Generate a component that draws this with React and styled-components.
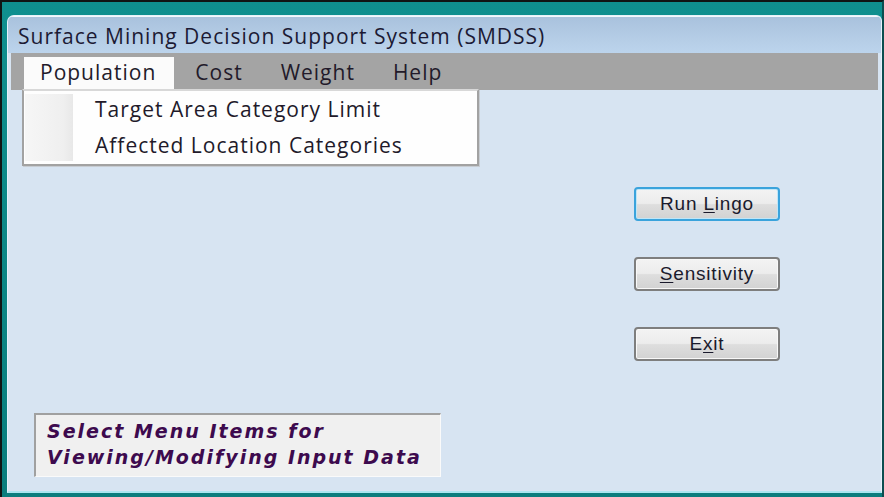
import React from 'react'
import styled, { createGlobalStyle } from 'styled-components'

const GlobalStyle = createGlobalStyle`
  html, body {
    margin: 0;
    padding: 0;
    background: #0a6f70;
  }
  * { box-sizing: border-box; }
`

const Screen = styled.div`
  width: 884px;
  height: 497px;
  overflow: hidden;
  display: flex;
  border-top: 2px solid #101414;
  border-left: 2px solid #101414;
  border-right: 2px solid #0c4e50;
  background: linear-gradient(180deg, #0f8f8f 0%, #0b8584 60%, #0a7d7d 100%);
  padding: 13px 0 4px 5px;
`

const Window = styled.div`
  flex: 1;
  display: flex;
  flex-direction: column;
  border: 1px solid #e6f1fb;
  border-bottom: 2px solid #a9e6f0;
  border-radius: 7px 6px 0 0;
  background: #d7e4f2;
  overflow: hidden;
`

const TitleBar = styled.div`
  height: 37px;
  flex: none;
  display: flex;
  align-items: center;
  padding: 2px 0 0 10px;
  background: linear-gradient(180deg, #a9c2dd 0%, #b5cde6 60%, #bcd4ec 100%);
  border-top: 1px solid #f4f8fc;
  font-family: "Open Sans", "Noto Sans", sans-serif;
  font-size: 21px;
  font-weight: 500;
  letter-spacing: 1px;
  color: #1c1a34;
`

const MenuBar = styled.div`
  height: 37px;
  flex: none;
  margin: 0 3px;
  display: flex;
  align-items: flex-end;
  padding-left: 13px;
  background: #a4a4a4;
  font-family: "Open Sans", "Noto Sans", sans-serif;
  font-size: 21px;
  font-weight: 500;
  letter-spacing: 1px;
  color: #221a2a;
`

const MenuItem = styled.div`
  height: 33px;
  display: flex;
  align-items: center;
  padding: 0 ${p => p.$right || 0}px 4px ${p => p.$left || 0}px;
  background: ${p => (p.$open ? '#fbfbfb' : 'transparent')};
`

const Content = styled.div`
  flex: 1;
  position: relative;
  display: flex;
  flex-direction: column;
`

const Dropdown = styled.div`
  position: absolute;
  top: -1px;
  left: 14px;
  width: 457px;
  height: 77px;
  display: flex;
  background: #fefefe;
  border: 2px solid #a2a2a2;
  border-top-color: #d8d8d8;
  box-shadow: 1px 1px 0 #c7ccd2;
  z-index: 2;
`

const Gutter = styled.div`
  width: 48px;
  flex: none;
  background: linear-gradient(90deg, #f6f6f6 0%, #efefef 80%, #e8e8e8 100%);
  margin: 3px 0 3px 1px;
`

const DropList = styled.div`
  display: flex;
  flex-direction: column;
  justify-content: center;
  gap: 7px;
  padding-left: 22px;
  font-family: "Open Sans", "Noto Sans", sans-serif;
  font-size: 21px;
  font-weight: 500;
  letter-spacing: 1px;
  color: #221a2a;
`

const DropEntry = styled.div`
  height: 29px;
  line-height: 29px;
`

const ButtonColumn = styled.div`
  display: flex;
  flex-direction: column;
  gap: 36px;
  padding: 97px 0 0 626px;
`

const WinButton = styled.button`
  width: 146px;
  height: 34px;
  padding: 0;
  border-radius: 4px;
  border: 2px solid ${p => (p.$focused ? '#3aa3dc' : '#7e7e7e')};
  box-shadow: inset 0 0 0 1px ${p => (p.$focused ? '#bfe6f8' : '#f8f8f8')};
  background: linear-gradient(180deg, #f3f3f3 0%, #ececec 48%, #dedede 52%, #d2d2d2 100%);
  font-family: "Liberation Sans", Arial, sans-serif;
  font-size: 19px;
  letter-spacing: 0.8px;
  color: #1a1a2c;
  cursor: default;

  u {
    text-decoration-thickness: 1px;
    text-underline-offset: 2px;
  }
`

const HintBox = styled.div`
  margin: auto 0 14px 26px;
  width: 407px;
  height: 64px;
  background: #f0f0f0;
  border-top: 2px solid #a0a0a0;
  border-left: 2px solid #a0a0a0;
  border-right: 1px solid #fafafa;
  border-bottom: 1px solid #fafafa;
  padding: 3px 0 0 11px;
  font-family: "DejaVu Sans", Verdana, sans-serif;
  font-weight: bold;
  font-style: italic;
  font-size: 19px;
  line-height: 26px;
  letter-spacing: 2px;
  color: #3d0a4e;
  white-space: nowrap;
`

export default function App() {
  return (
    <>
      <GlobalStyle />
      <Screen>
        <Window>
          <TitleBar>Surface Mining Decision Support System (SMDSS)</TitleBar>
          <MenuBar>
            <MenuItem $open $left={16} $right={18}>Population</MenuItem>
            <MenuItem $left={21}>Cost</MenuItem>
            <MenuItem $left={38}>Weight</MenuItem>
            <MenuItem $left={38}>Help</MenuItem>
          </MenuBar>
          <Content>
            <Dropdown>
              <Gutter />
              <DropList>
                <DropEntry>Target Area Category Limit</DropEntry>
                <DropEntry>Affected Location Categories</DropEntry>
              </DropList>
            </Dropdown>
            <ButtonColumn>
              <WinButton $focused>Run <u>L</u>ingo</WinButton>
              <WinButton><u>S</u>ensitivity</WinButton>
              <WinButton>E<u>x</u>it</WinButton>
            </ButtonColumn>
            <HintBox>
              Select Menu Items for
              <br />
              Viewing/Modifying Input Data
            </HintBox>
          </Content>
        </Window>
      </Screen>
    </>
  )
}
